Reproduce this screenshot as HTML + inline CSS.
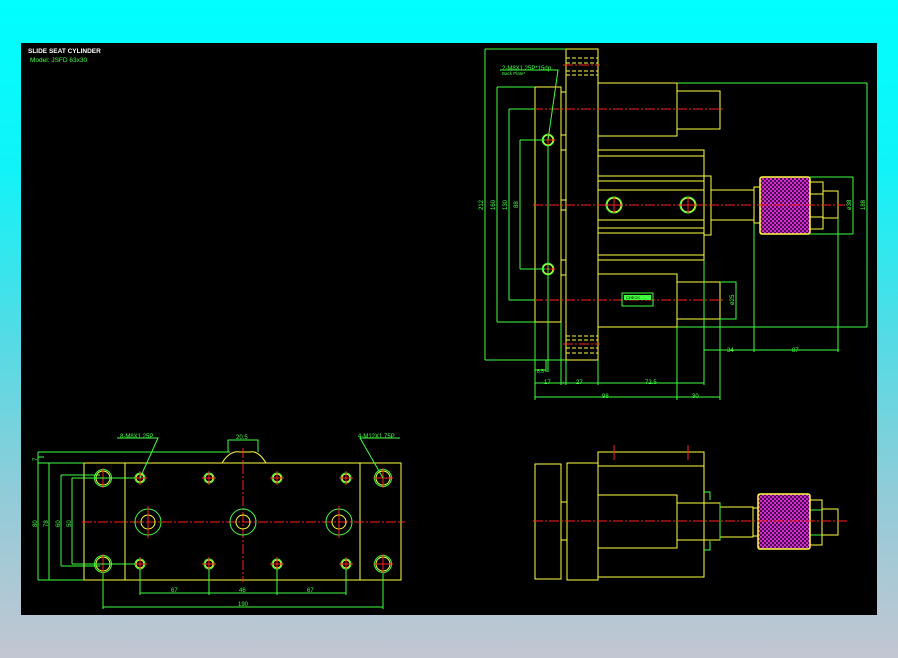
<!DOCTYPE html>
<html><head><meta charset="utf-8"><style>
html,body{margin:0;padding:0;width:898px;height:658px;overflow:hidden}
body{background:linear-gradient(to bottom,#00ffff 0%,#10f4f8 25%,#50dce6 50%,#90ccd8 75%,#c2c6d2 100%)}
svg{position:absolute;left:0;top:0}
text{font-family:"Liberation Sans",sans-serif}
</style></head><body>
<svg width="898" height="658" viewBox="0 0 898 658">
<defs>
<pattern id="kn" width="4" height="4" patternUnits="userSpaceOnUse">
<rect width="4" height="4" fill="#500050"/><rect width="2" height="2" fill="#d030d0"/><rect x="2" y="2" width="2" height="2" fill="#d030d0"/>
</pattern>
</defs>
<rect x="21" y="43" width="856" height="572" fill="#000"/>
<text x="28" y="53" fill="#fff" font-size="6.5" font-weight="bold">SLIDE SEAT CYLINDER</text>
<text x="30" y="62" fill="#40ff40" font-size="6.5">Model: JSFD 63x30</text>

<!-- TOP RIGHT VIEW -->
<g fill="none" stroke="#ffff40" stroke-width="1">
<rect x="566" y="49" width="32" height="311"/>
<rect x="535" y="87" width="26" height="235"/>
<path d="M561 92V322M561 92H566M561 135H566M561 150H566M561 200H566M561 210H566M561 260H566M561 275H566"/>
<rect x="598" y="83" width="79" height="53"/>
<rect x="677" y="91" width="43" height="38"/>
<rect x="598" y="274" width="79" height="53"/>
<rect x="677" y="282" width="43" height="37"/>
<rect x="598" y="150" width="106" height="110"/>
<path d="M598 156H704M598 176H704M598 181H704M598 190H704M598 220H704M598 228H704M598 233H704M598 255H704"/>
<rect x="704" y="176" width="7" height="59"/>
<rect x="711" y="190" width="43" height="30"/>
<rect x="754" y="187" width="6" height="36"/>
<rect x="810" y="182" width="13" height="47"/>
<path d="M810 194H823M810 217H823"/>
<rect x="823" y="191" width="15" height="27"/>
</g>
<path d="M566 58H598M566 63H598M566 71H598M566 75H598M566 336H598M566 340H598M566 348H598M566 353H598" stroke="#ffff40" stroke-width="1" stroke-dasharray="4,2"/>
<rect x="760" y="177" width="50" height="57" fill="url(#kn)" stroke="#ffff40" stroke-width="1.5" rx="2"/>
<g stroke="#ff2020" stroke-width="1" stroke-dasharray="10,2,2,2" fill="none">
<path d="M533 205H845M533 109H725M533 300H725M563 65H600M563 344H600"/>
</g>
<g fill="none" stroke="#ffff40"><circle cx="548" cy="140" r="5"/><circle cx="548" cy="269" r="5"/><circle cx="614" cy="205" r="7"/><circle cx="688" cy="205" r="7"/></g>
<g fill="none" stroke="#40ff40"><circle cx="548" cy="140" r="5.8"/><circle cx="548" cy="269" r="5.8"/><circle cx="614" cy="205" r="8"/><circle cx="688" cy="205" r="8"/></g>
<g stroke="#ff2020"><path d="M541 140H555M548 133V147M541 269H555M548 262V276M606 205H622M614 197V213M680 205H696M688 197V213"/></g>
<rect x="622" y="293" width="31" height="13" fill="none" stroke="#40ff40"/>
<rect x="624" y="295" width="27" height="5" fill="#40ff40"/>
<text x="626" y="299" font-size="4" fill="#000">CHECK</text>

<g fill="none" stroke="#40ff40" stroke-width="1">
<path d="M485 49V360M485 49H566M485 360H566"/>
<path d="M497 87V322M497 87H535M497 322H535"/>
<path d="M509 109V300M509 109H535M509 300H535"/>
<path d="M520 140V269M520 140H545M520 269H545"/>
<path d="M677 83H867M867 83V327M677 327H867"/>
<path d="M810 177H853M853 177V234M810 234H853"/>
<path d="M720 282H736V319H720"/>
<path d="M704 350H839M704 260V352M754 223V352M838 218V352"/>
<path d="M535 322V400M561 322V385M566 360V385M598 360V385M704 260V385M720 319V400M535 383H704M535 397H720M677 327V400"/>
<path d="M535 370H546M546 360V372M548 145V372"/>
<path d="M548 140L558 70H500"/>
</g>
<g fill="#40ff40" font-size="6">
<text x="502" y="70">2-M8X1.25P*15dp</text>
<text x="502" y="75" font-size="4.5">Back Plate*</text>
<text x="727" y="352">34</text><text x="792" y="352">87</text>
<text x="544" y="384">17</text><text x="562" y="384" font-size="4">4</text><text x="576" y="384">27</text><text x="645" y="384">72.5</text>
<text x="602" y="398">98</text><text x="692" y="398">30</text>
<text x="537" y="373" font-size="5">8.5</text>
<g transform="rotate(-90)">
<text x="-210" y="483">212</text><text x="-210" y="495">160</text><text x="-210" y="507">130</text><text x="-208" y="518">88</text>
<text x="-210" y="865">188</text><text x="-210" y="851">ø38</text><text x="-305" y="734">ø25</text>
</g>
</g>

<!-- BOTTOM LEFT VIEW -->
<g fill="none" stroke="#ffff40">
<rect x="84" y="463" width="317" height="117"/>
<path d="M125 463V580M360 463V580M222 463Q230 450 240 452H250Q258 450 266 463"/>
</g>
<g stroke="#ff2020" stroke-dasharray="10,2,2,2" fill="none"><path d="M82 522H405M243 448V582"/></g>
<g fill="none" stroke="#ffff40">
<circle cx="103" cy="478" r="7"/><circle cx="103" cy="564" r="7"/><circle cx="383" cy="478" r="7"/><circle cx="383" cy="564" r="7"/>
<circle cx="140" cy="478" r="4"/><circle cx="209" cy="478" r="4"/><circle cx="277" cy="478" r="4"/><circle cx="346" cy="478" r="4"/>
<circle cx="140" cy="564" r="4"/><circle cx="209" cy="564" r="4"/><circle cx="277" cy="564" r="4"/><circle cx="346" cy="564" r="4"/>
<circle cx="148" cy="522" r="7"/><circle cx="243" cy="522" r="7"/><circle cx="339" cy="522" r="7"/>
</g>
<g fill="none" stroke="#40ff40">
<circle cx="103" cy="478" r="8.5"/><circle cx="103" cy="564" r="8.5"/><circle cx="383" cy="478" r="8.5"/><circle cx="383" cy="564" r="8.5"/>
<circle cx="140" cy="478" r="5"/><circle cx="209" cy="478" r="5"/><circle cx="277" cy="478" r="5"/><circle cx="346" cy="478" r="5"/>
<circle cx="140" cy="564" r="5"/><circle cx="209" cy="564" r="5"/><circle cx="277" cy="564" r="5"/><circle cx="346" cy="564" r="5"/>
<circle cx="148" cy="522" r="13"/><circle cx="243" cy="522" r="13"/><circle cx="339" cy="522" r="13"/>
</g>
<g stroke="#ff2020">
<path d="M93 478H113M103 468V488M93 564H113M103 554V574M373 478H393M383 468V488M373 564H393M383 554V574"/>
<path d="M133 478H147M140 471V485M202 478H216M209 471V485M270 478H284M277 471V485M339 478H353M346 471V485"/>
<path d="M133 564H147M140 557V571M202 564H216M209 557V571M270 564H284M277 557V571M339 564H353M346 557V571"/>
<path d="M148 506V538M339 506V538"/>
</g>
<g fill="none" stroke="#40ff40">
<path d="M38 452V580M38 452H230M38 463H84M38 580H84M38 457H44"/>
<path d="M49 463V580"/>
<path d="M61 475V566M61 475H100M61 566H100"/>
<path d="M72 478V564M72 478H135M72 564H135"/>
<path d="M140 569V595M209 569V595M277 569V595M346 569V595M140 593H346"/>
<path d="M103 573V609M383 573V609M103 607H383"/>
<path d="M228 452V440H258V452"/>
<path d="M140 478L158 438H117M383 478L360 438H400"/>
</g>
<g fill="#40ff40" font-size="6">
<text x="120" y="438">8-M8X1.25P</text><text x="358" y="438">4-M12X1.75P</text>
<text x="236" y="439">20.5</text>
<text x="171" y="592">67</text><text x="239" y="592">46</text><text x="307" y="592">67</text><text x="238" y="606">190</text>
<g transform="rotate(-90)"><text x="-527" y="37">80</text><text x="-527" y="48">78</text><text x="-527" y="60">60</text><text x="-527" y="71">50</text><text x="-461" y="37">7</text></g>
</g>

<!-- BOTTOM RIGHT VIEW -->
<g fill="none" stroke="#ffff40">
<rect x="535" y="464" width="26" height="115"/>
<path d="M561 502H567M561 540H567"/>
<rect x="567" y="463" width="31" height="117"/>
<rect x="598" y="452" width="106" height="125"/>
<path d="M598 466H704"/>
<rect x="598" y="495" width="79" height="53"/>
<rect x="677" y="503" width="43" height="37"/>
<rect x="720" y="507" width="33" height="30"/>
<rect x="753" y="508" width="5" height="28"/>
<rect x="810" y="500" width="12" height="45"/>
<rect x="822" y="509" width="16" height="26"/>
</g>
<g stroke="#40ff40"><path d="M704 492H710V500M704 550H710V541M720 503V540M810 510H822M810 535H822"/></g>
<rect x="758" y="494" width="52" height="55" fill="url(#kn)" stroke="#ffff40" stroke-width="1.5" rx="2"/>
<g stroke="#ff2020"><path d="M533 521H848" stroke-dasharray="10,2,2,2"/><path d="M614 445V460M688 445V460"/></g>
</svg>
</body></html>
